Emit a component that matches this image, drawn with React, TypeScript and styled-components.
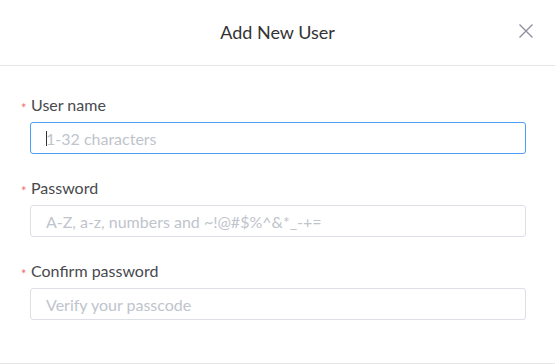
import React from 'react';
import styled, { createGlobalStyle } from 'styled-components';

const GlobalStyle = createGlobalStyle`
  html, body {
    margin: 0;
    padding: 0;
    background: #ffffff;
  }
  body {
    font-family: Lato, "Noto Sans", Arial, sans-serif;
  }
`;

interface FieldDef {
    label: string;
    placeholder: string;
    type: string;
    focused?: boolean;
}

const fields: FieldDef[] = [
    { label: 'User name', placeholder: '1-32 characters', type: 'text', focused: true },
    { label: 'Password', placeholder: 'A-Z, a-z, numbers and ~!@#$%^&*_-+=', type: 'password' },
    { label: 'Confirm password', placeholder: 'Verify your passcode', type: 'password' },
];

export default function App() {
    return (
        <>
            <GlobalStyle />
            <Dialog>
                <Header>
                    <Title>Add New User</Title>
                    <CloseButton aria-label="Close">
                        <svg width="16" height="16" viewBox="0 0 16 16">
                            <path d="M1.5 1.5 L14.5 14.5 M14.5 1.5 L1.5 14.5" stroke="#8a8e99" strokeWidth="1.3" fill="none" />
                        </svg>
                    </CloseButton>
                </Header>
                <Body>
                    {fields.map((f) => (
                        <Field key={f.label}>
                            <Label>{f.label}</Label>
                            <InputWrap>
                                <Input type={f.type} placeholder={f.placeholder} $focused={f.focused} />
                                {f.focused && <Caret />}
                            </InputWrap>
                        </Field>
                    ))}
                </Body>
                <Footer />
            </Dialog>
        </>
    );
}

const Dialog = styled.div`
  width: 555px;
  background: #fff;
  display: flex;
  flex-direction: column;
`;

const Header = styled.div`
  position: relative;
  height: 65px;
  display: flex;
  align-items: center;
  justify-content: center;
  border-bottom: 1px solid #e6e6e6;
`;

const Title = styled.h2`
  margin: 0;
  font-size: 18px;
  font-weight: 400;
  color: #333333;
  line-height: 24px;
  padding-bottom: 1px;
`;

const CloseButton = styled.button`
  position: absolute;
  right: 21px;
  top: 23px;
  width: 16px;
  height: 16px;
  padding: 0;
  border: none;
  background: none;
  display: flex;
  cursor: pointer;
`;

const Body = styled.div`
  padding: 27px 29px 43px 30px;
  display: flex;
  flex-direction: column;
  gap: 22px;
`;

const Field = styled.div`
  display: flex;
  flex-direction: column;
  gap: 5px;
`;

const Label = styled.label`
  position: relative;
  font-size: 16px;
  line-height: 24px;
  color: #48494d;
  padding-left: 1px;

  &::before {
    content: '*';
    position: absolute;
    left: -9px;
    top: 3px;
    font-size: 13px;
    color: #f56c6c;
  }
`;

const InputWrap = styled.div`
  position: relative;
`;

const Input = styled.input<{ $focused?: boolean }>`
  box-sizing: border-box;
  width: 100%;
  height: 32px;
  padding: 0 15px;
  border: 1px solid ${(p) => (p.$focused ? '#4d9ef5' : '#dcdfe6')};
  border-radius: 3px;
  font-family: Lato, "Noto Sans", Arial, sans-serif;
  font-size: 16px;
  color: #333;
  outline: none;
  background: #fff;

  &::placeholder {
    color: #c0c4cc;
  }
`;

const Caret = styled.span`
  position: absolute;
  left: 16px;
  top: 9px;
  width: 1px;
  height: 15px;
  background: #333;
`;

const Footer = styled.div`
  border-top: 1px solid #e6e6e6;
`;
